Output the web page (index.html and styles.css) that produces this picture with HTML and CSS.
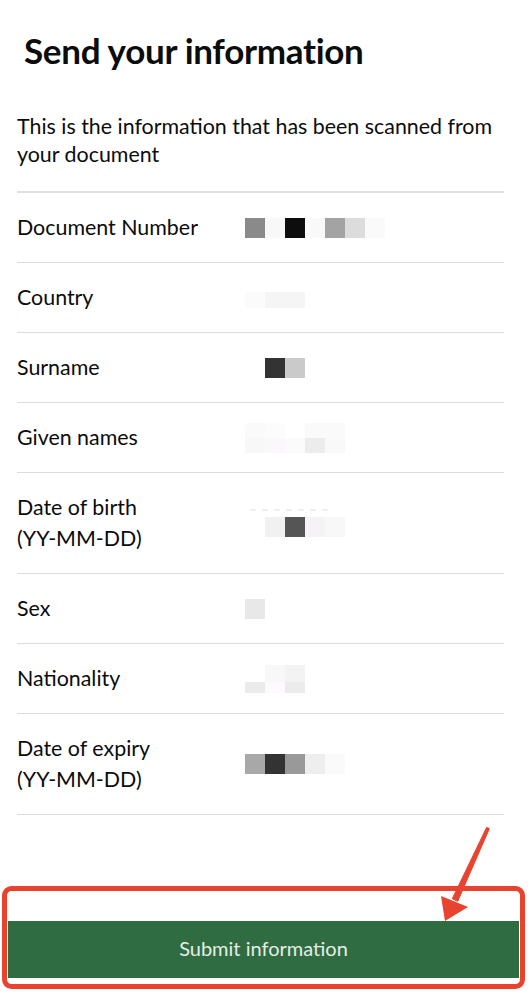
FILE: index.html
```
<!DOCTYPE html>
<html lang="en">
<head>
    <meta charset="UTF-8">
    <title>Send your information</title>
    <link rel="stylesheet" href="styles.css">
</head>
<body>
    <div class="page">
        <div class="content">
            <h1>Send your information</h1>
            <p class="intro">This is the information that has been scanned from your document</p>

            <!-- scanned fields, values are pixelated -->
            <div class="summary">
                <div class="row">
                    <div class="key">Document Number</div>
                    <div class="value">
                        <svg width="140" height="20" viewBox="0 0 140 20">
                            <rect x="0" width="20" height="20" fill="#8a8a8a"/>
                            <rect x="20" width="20" height="20" fill="#f8f8f8"/>
                            <rect x="40" width="20" height="20" fill="#0d0d0d"/>
                            <rect x="60" width="20" height="20" fill="#f9f9f9"/>
                            <rect x="80" width="20" height="20" fill="#a3a3a3"/>
                            <rect x="100" width="20" height="20" fill="#dcdcdc"/>
                            <rect x="120" width="20" height="20" fill="#fafafa"/>
                        </svg>
                    </div>
                </div>
                <div class="row">
                    <div class="key">Country</div>
                    <div class="value">
                        <svg width="60" height="20" viewBox="0 0 60 20">
                            <rect x="0" y="4" width="20" height="16" fill="#fbfbfb"/>
                            <rect x="20" y="4" width="40" height="16" fill="#f5f5f5"/>
                        </svg>
                    </div>
                </div>
                <div class="row">
                    <div class="key">Surname</div>
                    <div class="value">
                        <svg width="60" height="20" viewBox="0 0 60 20">
                            <rect x="20" width="20" height="20" fill="#333"/>
                            <rect x="40" width="20" height="20" fill="#cacaca"/>
                        </svg>
                    </div>
                </div>
                <div class="row">
                    <div class="key">Given names</div>
                    <div class="value">
                        <svg width="100" height="30" viewBox="0 0 100 30">
                            <rect x="0" width="20" height="15" fill="#fafafa"/>
                            <rect x="20" width="20" height="15" fill="#fcfcfc"/>
                            <rect x="60" width="20" height="15" fill="#fafafa"/>
                            <rect x="80" width="20" height="15" fill="#fafafa"/>
                            <rect x="0" y="15" width="20" height="15" fill="#f8f8f8"/>
                            <rect x="20" y="15" width="20" height="15" fill="#fbf8fb"/>
                            <rect x="40" y="15" width="20" height="15" fill="#fbfbfb"/>
                            <rect x="60" y="15" width="20" height="15" fill="#ececec"/>
                            <rect x="80" y="15" width="20" height="15" fill="#f9f9f9"/>
                        </svg>
                    </div>
                </div>
                <div class="row">
                    <div class="key">Date of birth<br>(YY-MM-DD)</div>
                    <div class="value">
                        <svg width="100" height="28" viewBox="0 0 100 28">
                            <path d="M5 1h6M17 1h6M29 1h6M41 1h6M53 1h6M65 1h6M77 1h6" stroke="#dedede" stroke-width="1"/>
                            <rect x="20" y="8" width="20" height="20" fill="#f1f1f1"/>
                            <rect x="40" y="8" width="20" height="20" fill="#555"/>
                            <rect x="60" y="8" width="20" height="20" fill="#f5f3f5"/>
                            <rect x="80" y="8" width="20" height="20" fill="#f8f8f8"/>
                        </svg>
                    </div>
                </div>
                <div class="row">
                    <div class="key">Sex</div>
                    <div class="value">
                        <svg width="20" height="20" viewBox="0 0 20 20">
                            <rect width="20" height="20" fill="#e8e8e8"/>
                        </svg>
                    </div>
                </div>
                <div class="row">
                    <div class="key">Nationality</div>
                    <div class="value">
                        <svg width="60" height="28" viewBox="0 0 60 28">
                            <rect x="20" width="20" height="17" fill="#f8f8f8"/>
                            <rect x="40" width="20" height="17" fill="#f3f3f3"/>
                            <rect x="0" y="17" width="20" height="11" fill="#ebebeb"/>
                            <rect x="20" y="17" width="20" height="11" fill="#fcfafc"/>
                            <rect x="40" y="17" width="20" height="11" fill="#ebebeb"/>
                        </svg>
                    </div>
                </div>
                <div class="row">
                    <div class="key">Date of expiry<br>(YY-MM-DD)</div>
                    <div class="value">
                        <svg width="100" height="20" viewBox="0 0 100 20">
                            <rect x="0" width="20" height="20" fill="#a8a8a8"/>
                            <rect x="20" width="20" height="20" fill="#333"/>
                            <rect x="40" width="20" height="20" fill="#999"/>
                            <rect x="60" width="20" height="20" fill="#eee"/>
                            <rect x="80" width="20" height="20" fill="#fafafa"/>
                        </svg>
                    </div>
                </div>
            </div>
        </div>

        <div class="footer">
            <button class="submit">Submit information</button>
            <!-- red annotation drawn over the button -->
            <svg class="callout" width="531" height="174" viewBox="0 0 531 174">
                <rect x="4.5" y="68.5" width="518" height="98" rx="7" fill="none" stroke="#e8432f" stroke-width="5"/>
                <polygon points="489.4,8.6 486.6,7.4 452.3,78.7 457.7,81.3" fill="#e8432f" stroke="#e8432f" stroke-width="1" stroke-linejoin="round"/>
                <polygon points="441,76 468,87 445,101" fill="#e8432f"/>
            </svg>
        </div>
    </div>
</body>
</html>
```

FILE: styles.css
```
* {
    box-sizing: border-box;
}
body {
    margin: 0;
    font-family: "Lato", "Liberation Sans", sans-serif;
    color: #0b0c0c;
    background: #fff;
}
.page {
    min-height: 100vh;
    display: flex;
    flex-direction: column;
}
.content {
    padding: 0 27px 0 17px;
}
h1 {
    margin: 30px 0 0 7px;
    font-size: 35px;
    line-height: 40px;
    font-weight: 700;
    letter-spacing: -0.3px;
}
.intro {
    margin: 42px 0 0;
    font-size: 21.4px;
    line-height: 28px;
    padding-bottom: 23px;
    border-bottom: 2px solid #e1e1e1;
}
.row {
    display: grid;
    grid-template-columns: 228px 1fr;
    align-items: center;
    padding: 19px 0;
    border-bottom: 1px solid #dcdcdc;
    font-size: 21.4px;
    line-height: 31px;
}
.value svg {
    display: block;
}
.footer {
    margin-top: auto;
    position: relative;
    padding: 0 12px 16px 8px;
}
.submit {
    display: block;
    width: 100%;
    height: 57px;
    padding: 0 0 4px;
    border: 0;
    background: #2f6c42;
    color: #e4eee4;
    font-family: "Lato", "Liberation Sans", sans-serif;
    font-size: 20px;
}
.callout {
    position: absolute;
    left: 0;
    top: -101px;
    pointer-events: none;
}
```
